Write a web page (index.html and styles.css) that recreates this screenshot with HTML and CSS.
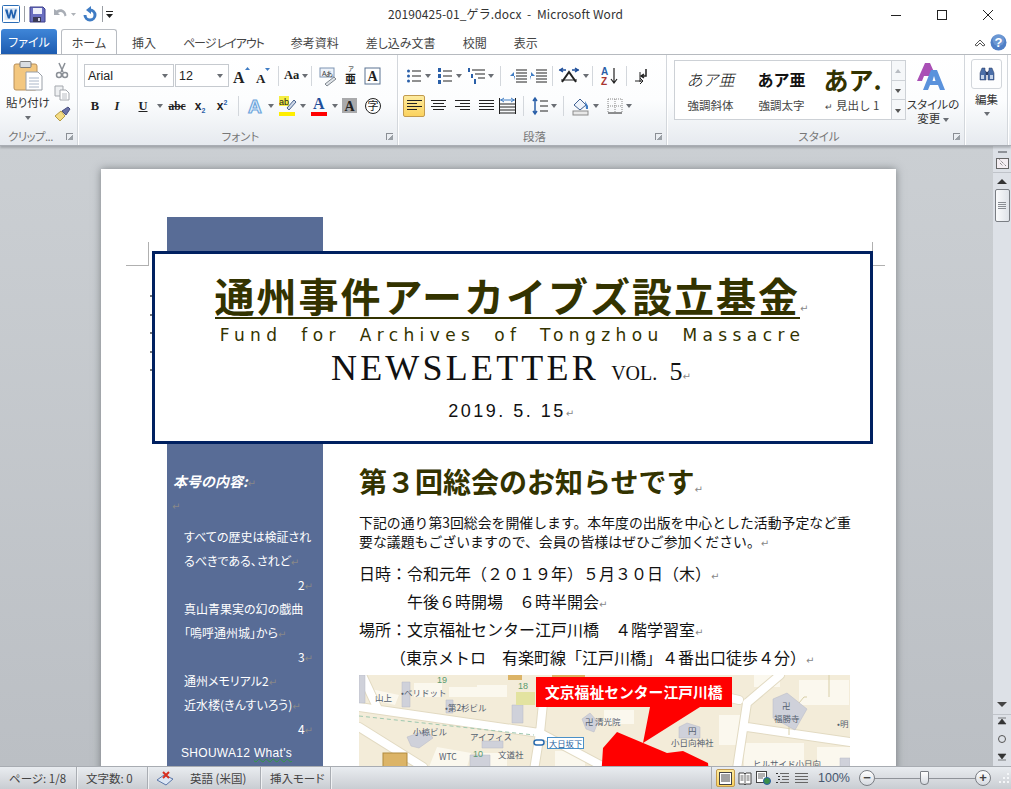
FILE: index.html
```html
<!DOCTYPE html>
<html lang="ja">
<head>
<meta charset="utf-8">
<title>20190425-01_ゲラ.docx - Microsoft Word</title>
<link rel="stylesheet" href="styles.css">
</head>
<body>
<div class="app">

  <header class="titlebar">
    <div class="qat">
      <svg width="18" height="18" viewBox="0 0 18 18"><rect x=".5" y=".5" width="17" height="17" rx="1" fill="#fff" stroke="#2b6cb5"/><rect x="2.5" y="3" width="13" height="12" fill="#dbe8f7"/><path d="M3 4.5h2.6l1.3 6 1.5-6h1.7l1.5 6 1.3-6h2l-2.3 9h-2l-1.3-5.500-1.400 5.500h-2z" fill="#1f5fae"/></svg>
      <i class="qat-sep"></i>
      <svg class="m4" width="17" height="17" viewBox="0 0 17 17"><path d="M1 1h13l2 2v13H1z" fill="#6a6fc0" stroke="#3d3f8a"/><rect x="4" y="2" width="9" height="6" fill="#eef0fa"/><rect x="4" y="11" width="8" height="5" fill="#3a3a56"/><rect x="9" y="12" width="2" height="3" fill="#cfd2e6"/></svg>
      <svg class="m5" width="18" height="16" viewBox="0 0 18 16"><path d="M3 3v6h6L7 7c3-2 6-.5 6.500 3.500l2-1C15 4 10 1.500 5.500 4.500z" fill="#a8adb5"/></svg>
      <svg width="9" height="16" viewBox="0 0 9 16"><path d="M2 7h5L4.500 10z" fill="#aeb2b8"/></svg>
      <svg class="m4" width="16" height="16" viewBox="0 0 16 16"><path d="M8 4a5 5 0 1 1-5 5" fill="none" stroke="#3f7cc4" stroke-width="3"/><path d="M9 0v8L4 4z" fill="#3f7cc4"/></svg>
      <i class="qat-sep m4"></i>
      <svg class="m2" width="10" height="16" viewBox="0 0 10 16"><rect x="1" y="5" width="7" height="1" fill="#222"/><path d="M1 8h7l-3.500 4z" fill="#222"/></svg>
    </div>
    <div class="doc-title">20190425-01_ゲラ.docx  -  Microsoft Word</div>
    <div class="winbtns">
      <svg width="46" height="28" viewBox="0 0 46 28"><rect x="18" y="15" width="10" height="1" fill="#222"/></svg>
      <svg width="46" height="28" viewBox="0 0 46 28"><rect x="18.500" y="10.500" width="9" height="9" fill="none" stroke="#222"/></svg>
      <svg width="46" height="28" viewBox="0 0 46 28"><path d="M18 10l10 10M28 10L18 20" stroke="#222" fill="none"/></svg>
    </div>
  </header>

  <nav class="tabs">
    <a class="tab-file">ファイル</a>
    <a class="tab tab-on">ホーム</a>
    <a class="tab">挿入</a>
    <a class="tab tab-tight">ページ レイアウト</a>
    <a class="tab">参考資料</a>
    <a class="tab">差し込み文書</a>
    <a class="tab">校閲</a>
    <a class="tab">表示</a>
    <div class="tabs-right">
      <svg width="14" height="12" viewBox="0 0 14 12"><path d="M2 8l5-5 5 5-2 1-3-3-3 3z" fill="none" stroke="#555"/></svg>
      <svg width="17" height="17" viewBox="0 0 17 17"><circle cx="8.500" cy="8.500" r="8" fill="#4f7fc6"/><circle cx="8.500" cy="6" r="6" fill="#7ea6dc" opacity=".6"/><text x="8.500" y="13" text-anchor="middle" class="help-q">?</text></svg>
    </div>
  </nav>

  <section class="ribbon">
    <!-- Clipboard -->
    <div class="group g-clip">
      <div class="group-body clip-body">
        <div class="bigbtn paste">
          <svg width="30" height="30" viewBox="0 0 30 30"><rect x="1" y="3" width="23" height="26" rx="2" fill="#f3c77f" stroke="#b9905a"/><rect x="7" y="0.500" width="11" height="6" rx="1" fill="#d9dde2" stroke="#7d7d7d"/><path d="M13 11h12l4 4v14H13z" fill="#fff" stroke="#9aa0a8"/><path d="M16 17h10M16 20h10M16 23h10M16 26h10" stroke="#a9b6c8"/></svg>
          <span class="biglabel">貼り付け</span>
          <span class="drop"></span>
        </div>
        <div class="clip-small">
          <svg width="16" height="18" viewBox="0 0 16 18"><path d="M5 1l4 9M11 1L7 10" stroke="#8a8f96" stroke-width="1.500" fill="none"/><circle cx="5" cy="13" r="2.500" fill="none" stroke="#8a8f96" stroke-width="1.500"/><circle cx="11" cy="13" r="2.500" fill="none" stroke="#8a8f96" stroke-width="1.500"/></svg>
          <svg width="16" height="16" viewBox="0 0 16 16"><path d="M1 1h8v10H1z" fill="#eef0f2" stroke="#a3a7ad"/><path d="M6 5h6l3 3v7H6z" fill="#fff" stroke="#a3a7ad"/><path d="M8 9h5M8 11h5M8 13h5" stroke="#b9bdc3"/></svg>
          <svg width="17" height="16" viewBox="0 0 17 16"><path d="M1 10l6-5 4 5-5 5z" fill="#f4dc84" stroke="#b59b45"/><path d="M8 5l6-4 2 2-4 6z" fill="#6a72a8" stroke="#484f80"/></svg>
        </div>
      </div>
      <div class="group-label label-left"><span>クリップ...</span><i class="launch"></i></div>
    </div>

    <!-- Font -->
    <div class="group g-font">
      <div class="group-body">
        <div class="row">
          <div class="combo combo-name"><span>Arial</span><i class="drop"></i></div>
          <div class="combo combo-size m1"><span>12</span><i class="drop"></i></div>
          <svg class="m3" width="20" height="22" viewBox="0 0 20 22"><text x="1" y="18" class="glyph-a">A</text><path d="M13 5h5l-2.500-3z" fill="#3f7cc4"/></svg>
          <svg class="m1" width="20" height="22" viewBox="0 0 20 22"><text x="3" y="18" class="glyph-a sm">A</text><path d="M12 3h5l-2.500 3z" fill="#3f7cc4"/></svg>
          <i class="sep sep-4"></i>
          <span class="aa">Aa</span><i class="drop drop-in"></i>
          <i class="sep sep-3"></i>
          <svg class="m6" width="20" height="22" viewBox="0 0 20 22"><rect x="2" y="3" width="14" height="9" fill="#eef3fa" stroke="#7d93b2"/><text x="4" y="10.500" class="tiny">Aあ</text><path d="M7 19l9-7 2 2-9 7z" fill="#dfe3e8" stroke="#808890"/></svg>
          <svg class="m4" width="17" height="22" viewBox="0 0 17 22"><text x="6" y="6" class="ruby-t">ア</text><text x="3" y="18" class="ruby-b">亜</text></svg>
          <svg class="m5" width="17" height="22" viewBox="0 0 17 22"><rect x="1" y="3" width="15" height="16" fill="#fff" stroke="#5b7391"/><text x="3.500" y="16" class="glyph-a box">A</text></svg>
        </div>
        <div class="row row2">
          <span class="fmt b">B</span>
          <span class="fmt i">I</span>
          <span class="fmt u m4">U</span><i class="drop drop-in"></i>
          <span class="fmt abc m2">abc</span>
          <span class="fmt sub">x<sub>2</sub></span>
          <span class="fmt sub">x<sup>2</sup></span>
          <i class="sep sep-4"></i>
          <svg class="m8" width="18" height="20" viewBox="0 0 18 20"><text x="1" y="17" class="glow">A</text></svg><i class="drop drop-in"></i>
          <svg class="m5" width="18" height="22" viewBox="0 0 18 22"><rect x="0" y="1" width="10" height="10" fill="#f5ee42"/><text x="0" y="10" class="tiny dark">ab</text><path d="M8 13l7-8 2 2-7 8z" fill="#cdd7e8" stroke="#4b6590"/><rect x="0" y="17" width="16" height="4" fill="#ffee00"/></svg><i class="drop drop-in"></i>
          <svg class="m5" width="18" height="22" viewBox="0 0 18 22"><text x="2" y="14" class="glyph-a blue">A</text><rect x="0" y="17" width="16" height="4" fill="#f00"/></svg><i class="drop drop-in"></i>
          <svg class="m4" width="18" height="18" viewBox="0 0 18 18"><rect width="15" height="15" y="1" fill="#a9aaac"/><text x="2.500" y="14" class="glyph-a box">A</text></svg>
          <svg class="m4" width="18" height="18" viewBox="0 0 18 18"><circle cx="9" cy="9" r="7.500" fill="#fff" stroke="#222"/><text x="3.500" y="13" class="ruby-c">字</text></svg>
        </div>
      </div>
      <div class="group-label"><span>フォント</span><i class="launch"></i></div>
    </div>

    <!-- Paragraph -->
    <div class="group g-para">
      <div class="group-body">
        <div class="row">
          <svg class="m3" width="16" height="18" viewBox="0 0 16 18"><path d="M6 4h9M6 9h9M6 14h9" stroke="#222"/><circle cx="2.500" cy="4" r="1.500" fill="#2a5fa8"/><circle cx="2.500" cy="9" r="1.500" fill="#2a5fa8"/><circle cx="2.500" cy="14" r="1.500" fill="#2a5fa8"/></svg><i class="drop drop-in"></i>
          <svg class="m6" width="16" height="18" viewBox="0 0 16 18"><path d="M6 4h9M6 9h9M6 14h9" stroke="#222"/><path d="M1 1h3v4H1zM1 7h3v4H1zM1 13h3v4H1z" fill="#2a5fa8"/></svg><i class="drop drop-in"></i>
          <svg class="m5" width="18" height="18" viewBox="0 0 18 18"><path d="M5 3h13M8 7h10M11 11h7" stroke="#222"/><path d="M1 1h2v4H1zM4 7h2v4H4zM7 12h2v5H7z" fill="#2a5fa8"/></svg><i class="drop drop-in"></i>
          <i class="sep sep-5"></i>
          <svg class="m8" width="18" height="18" viewBox="0 0 18 18"><path d="M7 3h11M7 6h11M7 9h11M7 12h11M7 15h11" stroke="#222"/><path d="M6 9H1l4-4v8z" fill="#3f7cc4"/></svg>
          <svg class="m2" width="18" height="18" viewBox="0 0 18 18"><path d="M7 3h11M7 6h11M7 9h11M7 12h11M7 15h11" stroke="#222"/><path d="M1 9h5L2 5v8z" fill="#3f7cc4"/></svg>
          <i class="sep sep-4"></i>
          <svg class="m5" width="22" height="18" viewBox="0 0 22 18"><path d="M4 15L11 5l7 10" fill="none" stroke="#222" stroke-width="2"/><path d="M3 13h16" stroke="#222"/><path d="M1 3h7M5 1l-3 2 3 2M14 3h7M17 1l3 2-3 2" stroke="#1f4f9a" fill="none" stroke-width="1.500"/></svg><i class="drop drop-in"></i>
          <i class="sep sep-3"></i>
          <svg class="m7" width="20" height="20" viewBox="0 0 20 20"><text x="1" y="9" class="az blue">A</text><text x="1" y="19" class="az red">Z</text><path d="M14 2v14M11 13l3 4 3-4" fill="none" stroke="#222" stroke-width="1.200"/></svg>
          <i class="sep sep-5"></i>
          <svg class="m6" width="18" height="20" viewBox="0 0 18 20"><path d="M13 3v7H8M11 8L8 10l3 2" fill="none" stroke="#222" stroke-width="1.500"/><path d="M7 6v10" stroke="#222"/><path d="M2 15h8M7 12l3 3-3 3" fill="none" stroke="#222"/></svg>
        </div>
        <div class="row row2">
          <span class="align on"><svg width="15" height="12" viewBox="0 0 15 12"><path d="M0 .5h15M0 3.500h10M0 6.500h15M0 9.500h10" stroke="#222"/></svg></span>
          <span class="align m2"><svg width="15" height="12" viewBox="0 0 15 12"><path d="M0 .5h15M2 3.500h11M0 6.500h15M2 9.500h11" stroke="#222"/></svg></span>
          <span class="align m2"><svg width="15" height="12" viewBox="0 0 15 12"><path d="M0 .5h15M5 3.500h10M0 6.500h15M5 9.500h10" stroke="#222"/></svg></span>
          <span class="align m2"><svg width="15" height="12" viewBox="0 0 15 12"><path d="M0 .5h15M0 3.500h15M0 6.500h15M0 9.500h15" stroke="#222"/></svg></span>
          <svg class="m2" width="18" height="18" viewBox="0 0 18 18"><path d="M1 7h15M1 10h15M1 13h15M1 16h15" stroke="#222"/><path d="M1 3h15M5 1L2 3l3 2M12 1l3 2-3 2" stroke="#3f7cc4" fill="none"/><path d="M.5 1v16M16.500 1v16" stroke="#222"/></svg>
          <i class="sep sep-5"></i>
          <svg class="m8" width="16" height="20" viewBox="0 0 16 20"><path d="M3 2v16M1 5l2-3 2 3M1 15l2 3 2-3" stroke="#2a5fa8" fill="none" stroke-width="1.500"/><path d="M8 5h8M8 10h8M8 15h8" stroke="#222"/></svg><i class="drop drop-in"></i>
          <i class="sep sep-5"></i>
          <svg class="m8" width="18" height="20" viewBox="0 0 18 20"><path d="M2 9l6-6 6 6-6 5z" fill="#eef3fa" stroke="#3f5f90"/><path d="M13 5l3 5v3h-2z" fill="#3f7cc4"/><rect x="1" y="15" width="15" height="4" fill="#e8e8e8" stroke="#8b8b8b"/></svg><i class="drop drop-in"></i>
          <svg class="m8" width="16" height="16" viewBox="0 0 16 16"><path d="M1 1h14M1 8h14M8 1v14M1 1v14M15 1v14" stroke="#888" stroke-dasharray="1 1" fill="none"/><path d="M1 15h14" stroke="#222"/></svg><i class="drop drop-in"></i>
        </div>
      </div>
      <div class="group-label"><span>段落</span><i class="launch"></i></div>
    </div>

    <!-- Styles -->
    <div class="group g-style">
      <div class="group-body style-body">
        <div class="gallery">
          <div class="style-item"><span class="sample s-italic">あア亜</span><span class="style-name">強調斜体</span></div>
          <div class="style-item"><span class="sample s-bold">あア亜</span><span class="style-name">強調太字</span></div>
          <div class="style-item"><span class="sample s-head">あア.</span><span class="style-name"><small>↵</small> 見出し 1</span></div>
          <div class="gallery-scroll">
            <span class="gs gs-up"></span><span class="gs gs-down"></span><span class="gs gs-more"></span>
          </div>
        </div>
        <div class="bigbtn change">
          <svg width="34" height="29" viewBox="0 0 34 29"><path d="M1 19L9 1h5l8 18h-4l-2-5H8l-2 5z" fill="#a94fb5"/><path d="M7 28L15 8h6l8 20h-5l-2-5h-8l-2 5z" fill="#5a92dc"/><path d="M16.500 19h3L18 14z" fill="#fff"/></svg>
          <span class="biglabel">スタイルの</span>
          <span class="biglabel">変更 <i class="drop drop-inline"></i></span>
        </div>
      </div>
      <div class="group-label"><span>スタイル</span><i class="launch"></i></div>
    </div>

    <!-- Editing -->
    <div class="group g-edit">
      <div class="group-body edit-body">
        <div class="edit-btn"><svg width="16" height="14" viewBox="0 0 16 14"><path d="M3 1h3v3h1v9H1V6zM10 1h3l2 5v7H9V4h1z" fill="#4a6ea8" stroke="#2c3e66" stroke-width=".5"/><rect x="7" y="5" width="2" height="3" fill="#2c3e66"/><rect x="2" y="8" width="3" height="4" fill="#c4d3ea"/><rect x="11" y="8" width="3" height="4" fill="#c4d3ea"/></svg></div>
        <span class="biglabel">編集</span>
        <span class="drop"></span>
      </div>
    </div>
  </section>

  <main class="workspace">
    <div class="doc">
      <article class="page">
        <i class="crop crop-l"></i>
        <i class="crop crop-r"></i>
        <div class="anchors"><i></i><i></i><i></i><i></i><i></i></div>

        <aside class="sidebar">
          <p class="side-head">本号の内容:<b class="pm">↵</b></p>
          <p class="side-blank"><b class="pm">↵</b></p>
          <p class="toc toc-first">すべての歴史は検証され</p>
          <p class="toc">るべきである、されど<b class="pm">↵</b></p>
          <p class="toc-no">2<b class="pm">↵</b></p>
          <p class="toc">真山青果実の幻の戯曲</p>
          <p class="toc">「嗚呼通州城」から<b class="pm">↵</b></p>
          <p class="toc-no">3<b class="pm">↵</b></p>
          <p class="toc">通州メモリアル2<b class="pm">↵</b></p>
          <p class="toc">近水楼(きんすいろう)<b class="pm">↵</b></p>
          <p class="toc-no">4<b class="pm">↵</b></p>
          <p class="toc toc-en">SHOUWA12 <span class="squiggle">What's</span></p>
        </aside>

        <div class="body">
          <h2 class="notice">第３回総会のお知らせです<b class="pm">↵</b></h2>
          <p class="lead">下記の通り第3回総会を開催します。本年度の出版を中心とした活動予定など重<br>要な議題もございますので、会員の皆様はぜひご参加ください。<b class="pm">↵</b></p>
          <p class="info">日時：令和元年（２０１９年）５月３０日（木）<b class="pm">↵</b></p>
          <p class="info indent">午後６時開場　６時半開会<b class="pm">↵</b></p>
          <p class="info">場所：文京福祉センター江戸川橋　４階学習室<b class="pm">↵</b></p>
          <p class="info indent2">（東京メトロ　有楽町線「江戸川橋」４番出口徒歩４分）<b class="pm">↵</b></p>
          <svg class="map" width="491" height="120" viewBox="0 0 491 120">
            <rect width="491" height="120" fill="#f3ecd9"/>
            <!-- blocks -->
            <g fill="#fbf8ee">
              <path d="M12 14l28 6-4 10-26-6zM55 8h28v14H55zM90 12h40v10H90zM118 10h30v12h-30zM196 10h30v14h-30zM245 35h30v14h-30zM360 40h24v30h-24zM395 0h26v12h-26zM440 5h50v25h-50zM385 68h60v24h-60zM78 72l34 6-4 14H70zM120 78h28v14h-28zM196 76h30v16h-30zM458 72h33v20h-33zM275 5h40v20h-40z"/>
            </g>
            <!-- roads -->
            <g fill="none" stroke="#e2dac2" stroke-width="10" stroke-linecap="round">
              <path d="M0 32L181 58 260 100M184 28L181 58 171 120M0 52L64 92M3 0L18 32M388 28L374 120M421 0L388 28M388 52L491 67M380 25L350 18"/>
            </g>
            <g fill="none" stroke="#fff" stroke-width="8" stroke-linecap="round">
              <path d="M0 32L181 58 260 100M184 28L181 58 171 120M0 52L64 92M3 0L18 32M388 28L374 120M421 0L388 28M388 52L491 67M380 25L350 18"/>
            </g>
            <path d="M0 41L175 60" stroke="#9fc8b0" stroke-dasharray="4 3" fill="none"/>
            <path d="M430 60V40L445 22h3M470 0V22" stroke="#d8cfa8" fill="none"/>
            <!-- buildings -->
            <g fill="#cfd1da" stroke="#b6b9c6" stroke-width=".5">
              <path d="M43 7h8v25h-8zM87 25h7v13h-7zM153 30h11v18h-11zM223 44l8-6 8 9-4 10-8-3zM48 62l20-7 6 8-14 10-8-2zM123 66h21v7h-21zM111 80h20v12h-20zM320 52l8-4 13 4v11h-21zM414 24l14-6 20 16-12 21-22-12zM0 0h6v28H0zM481 83h10v9h-10z"/>
            </g>
            <rect x="24" y="78" width="24" height="30" fill="#dcb467" stroke="#b08a3f"/>
            <rect x="149" y="-2" width="14" height="7" fill="#dcb467"/>
            <rect x="193" y="-2" width="33" height="4" fill="#dcb467"/>
            <rect x="157" y="17" width="19" height="13" fill="#e3e3a0"/>
            <!-- labels -->
            <g class="map-label">
              <text x="16" y="26">山上</text>
              <text x="42" y="21">•ベリドット</text>
              <text x="86" y="36">•第2杉ビル</text>
              <text x="236" y="50">清光院</text>
              <text x="226" y="50">卍</text>
              <text x="312" y="71">小日向神社</text>
              <text x="329" y="59">円</text>
              <text x="415" y="47">福勝寺</text>
              <text x="423" y="34">卍</text>
              <text x="478" y="52">•明</text>
              <text x="54" y="60">小椋ビル</text>
              <text x="111" y="65">アイフィス</text>
              <text x="139" y="83">文道社</text>
              <text x="80" y="85">WTC</text>
              <text x="394" y="92">ヒルサイド小日向</text>
            </g>
            <g class="map-num">
              <text x="78" y="8">19</text>
              <text x="159" y="14">18</text>
              <text x="114" y="82">10</text>
            </g>
            <rect x="188.500" y="62.500" width="36" height="11" fill="#fff" stroke="#4a90c8"/>
            <rect x="175" y="65" width="10" height="5" rx="2.500" fill="#fff" stroke="#2a6cb0" stroke-width="1.500"/>
            <text x="190" y="71.500" class="map-station">大日坂下</text>
            <!-- venue outline and callout -->
            <path d="M244 73L258 57 308 78 324 76 349 88 352 120H241z" fill="#f00"/>
            <path d="M177 2H373V32H341L284 68 291 32H177z" fill="#f00"/>
            <text x="186" y="23" class="map-callout">文京福祉センター江戸川橋</text>
          </svg>
        </div>

        <section class="banner">
          <h1 class="banner-title"><span>通州事件アーカイブズ設立基金</span><b class="pm">↵</b></h1>
          <p class="banner-en">Fund for Archives of Tongzhou Massacre</p>
          <p class="banner-news">NEWSLETTER <small>VOL.</small> <em>5</em><b class="pm">↵</b></p>
          <p class="banner-date">2019. 5. 15<b class="pm">↵</b></p>
        </section>
      </article>
    </div>

    <div class="vscroll">
      <i class="split"></i>
      <svg class="ruler-toggle" width="13" height="13" viewBox="0 0 13 13"><rect x=".5" y="2.500" width="12" height="10" fill="#f4eef2" stroke="#666"/><path d="M2 2l8 8M4 7l3 3" stroke="#666" stroke-dasharray="1 1"/></svg>
      <i class="sb-line"></i>
      <i class="arrow-up"></i>
      <div class="thumb"><i></i><i></i><i></i><i></i></div>
      <div class="sb-space"></div>
      <i class="arrow-down"></i>
      <i class="sb-line"></i>
      <svg class="browse" width="10" height="10" viewBox="0 0 10 10"><path d="M1 1h8M5 2L1 7h8z" fill="#333" stroke="#333" stroke-width=".6"/></svg>
      <svg class="browse" width="10" height="10" viewBox="0 0 10 10"><circle cx="5" cy="5" r="3.500" fill="none" stroke="#555"/></svg>
      <svg class="browse" width="10" height="10" viewBox="0 0 10 10"><path d="M1 9h8M5 8L1 3h8z" fill="#333" stroke="#333" stroke-width=".6"/></svg>
    </div>
  </main>

  <footer class="status">
    <span class="st st1">ページ: 1/8</span>
    <span class="st st2">文字数: 0</span>
    <span class="st st3"><svg width="18" height="16" viewBox="0 0 18 16"><path d="M1 10l7-5 9 4-7 6z" fill="#dce6f4" stroke="#5a76a8"/><path d="M7 2l6 6M13 2L7 8" stroke="#d83020" stroke-width="2"/></svg></span>
    <span class="st st4">英語 (米国)</span>
    <span class="st st5">挿入モード</span>
    <div class="status-right">
      <i class="st-div"></i>
      <span class="view on"><svg width="13" height="13" viewBox="0 0 13 13"><rect x=".5" y=".5" width="12" height="12" fill="#fff" stroke="#444"/><path d="M2 3h9M2 5h9M2 7h9M2 9h9" stroke="#444"/></svg></span>
      <span class="view"><svg width="14" height="13" viewBox="0 0 14 13"><path d="M1 1h5l1 1 1-1h5v11H8l-1 1-1-1H1z" fill="#fff" stroke="#444"/><path d="M7 2v10M2.500 4h3M2.500 6h3M2.500 8h3M8.500 4h3M8.500 6h3M8.500 8h3" stroke="#666"/></svg></span>
      <span class="view"><svg width="15" height="14" viewBox="0 0 15 14"><rect x=".5" y=".5" width="10" height="11" fill="#fff" stroke="#444"/><path d="M2 3h7M2 5h7M2 7h5" stroke="#666"/><circle cx="11" cy="10" r="3.500" fill="#3a8f4a" stroke="#2a5fa8"/></svg></span>
      <span class="view"><svg width="13" height="13" viewBox="0 0 13 13"><path d="M4 1.500h9M6 4.500h7M6 7.500h7M4 10.500h9" stroke="#666"/><path d="M0 1.500h2M2 4.500h2M2 7.500h2M0 10.500h2" stroke="#333"/></svg></span>
      <span class="view"><svg width="13" height="13" viewBox="0 0 13 13"><path d="M0 1.500h13M0 4.500h13M0 7.500h13M0 10.500h13" stroke="#666"/></svg></span>
      <span class="zoom-pct">100%</span>
      <span class="zoom-btn">−</span>
      <span class="slider"><i></i></span>
      <span class="zoom-btn">+</span>
      <svg class="grip" width="12" height="14" viewBox="0 0 12 14"><path d="M9 2h2v2H9zM5 6h2v2H5zM9 6h2v2H9zM1 10h2v2H1zM5 10h2v2H5zM9 10h2v2H9z" fill="#f4f6f8"/></svg>
    </div>
  </footer>
</div>
</body>
</html>
```
FILE: styles.css
```css
* { box-sizing: border-box; }
html, body { margin: 0; padding: 0; }
body {
  font-family: "Noto Sans CJK JP", "Noto Sans", sans-serif;
  background: #fff;
  color: #222;
}
p, h1, h2 { margin: 0; font-weight: normal; }
i { font-style: normal; display: block; }
svg { display: block; flex: none; }

.app { width: 1011px; height: 789px; display: flex; flex-direction: column; overflow: hidden; }

.m1 { margin-left: 1px; } .m2 { margin-left: 2px; } .m3 { margin-left: 3px; }
.m4 { margin-left: 4px; } .m5 { margin-left: 5px; } .m6 { margin-left: 6px; }
.m7 { margin-left: 7px; } .m8 { margin-left: 8px; }

/* Title bar */
.titlebar { height: 28px; flex: none; display: grid; grid-template-columns: 1fr auto 1fr; align-items: center; background: #fff; }
.qat { display: flex; align-items: center; padding-left: 2px; }
.qat-sep { width: 1px; height: 16px; background: #9a9ea4; margin-left: 4px; }
.doc-title { font-size: 12px; color: #333; line-height: 28px; white-space: pre; letter-spacing: .1px; }
.winbtns { display: flex; justify-content: flex-end; }

/* Tabs */
.tabs { height: 26px; flex: none; display: flex; align-items: flex-end; padding-left: 1px; position: relative; background: #fff; font-feature-settings: "palt"; }
.tab-file { width: 56px; height: 25px; background: linear-gradient(#3f86d8, #1d5bb0); color: #fff; font-size: 12px; line-height: 25px; text-align: center; border-radius: 3px 3px 0 0; margin-right: 4px; }
.tab { height: 25px; padding: 0 12.500px; font-size: 12px; line-height: 25px; color: #444; border: 1px solid transparent; border-bottom: 0; white-space: nowrap; }
.tab-tight { letter-spacing: -1.100px; }
.tab-on { width: 56px; height: 26px; padding: 0; text-align: center; margin-bottom: -1px; margin-right: 1.500px; border-color: #b8bcc2; border-radius: 3px 3px 0 0; background: #fff; position: relative; z-index: 1; }
.tabs-right { margin-left: auto; display: flex; align-items: center; gap: 3px; padding: 0 4px 3px 0; }
.help-q { font: bold 13px "Liberation Sans", sans-serif; fill: #fff; }

/* Ribbon */
.ribbon { height: 92px; flex: none; display: flex; border-top: 1px solid #b6babf; border-bottom: 1px solid #a9adb3; box-shadow: 0 2px 2px rgba(90,95,100,.35); background: linear-gradient(#fff 0, #fcfdfe 50%, #e6eaef 100%); position: relative; z-index: 2; }
.group { display: flex; flex-direction: column; flex: none; border-right: 1px solid #d3d7dc; box-shadow: 1px 0 0 #fff; }
.g-clip { width: 78px; }
.g-font { width: 319px; padding-left: 5px; margin-left: 1px; }
.g-para { width: 268px; padding-left: 4px; margin-left: 1px; }
.g-style { width: 297px; padding-left: 6px; margin-left: 1px; }
.g-edit { width: 42px; margin-left: 1px; }
.group-body { flex: 1; padding-top: 9px; }
.group-label { height: 16px; flex: none; display: flex; justify-content: center; align-items: center; font-size: 11.500px; color: #777; position: relative; line-height: 16px; margin-bottom: 1px; font-feature-settings: "palt"; }
.label-left { justify-content: flex-start; padding-left: 8px; letter-spacing: -.6px; }
.launch { position: absolute; right: 4px; top: 5px; width: 7px; height: 7px; border-top: 1px solid #8a8e94; border-left: 1px solid #8a8e94; background: linear-gradient(135deg, transparent 55%, #9aa0a6 55%); }

.clip-body { display: flex; padding-top: 0; }
.bigbtn { display: flex; flex-direction: column; align-items: center; }
.paste { width: 46px; margin-left: 5px; padding-top: 6px; }
.paste svg { margin-bottom: 4px; }
.biglabel { font-size: 11.500px; line-height: 14px; color: #333; white-space: nowrap; font-feature-settings: "palt"; }
.clip-small { margin-left: 3px; padding-top: 7px; display: flex; flex-direction: column; gap: 5px; }
.drop { width: 0; height: 0; border: 3.500px solid transparent; border-top: 4px solid #6a6e74; border-bottom: 0; display: block; }
span.drop { margin-top: 7px; }
.drop-in { margin-left: 3px; flex: none; }
.drop-inline { display: inline-block; vertical-align: middle; }

.row { display: flex; align-items: center; height: 23px; }
.row2 { margin-top: 7px; }
.combo { height: 23px; background: #fff; border: 1px solid #c6cacf; display: flex; align-items: center; justify-content: space-between; padding: 0 5px 0 3px; font: 12.500px "Liberation Sans", sans-serif; color: #222; }
.combo-name { width: 90px; }
.combo-size { width: 54px; }
.sep { width: 1px; height: 20px; background: #d3d7dc; flex: none; }
.sep-3 { margin-left: 3px; } .sep-4 { margin-left: 5px; } .sep-5 { margin-left: 6px; }
.glyph-a { font: bold 16px "Liberation Serif", serif; fill: #222; }
.glyph-a.sm { font-size: 13px; }
.glyph-a.box { font-size: 14px; }
.glyph-a.blue { fill: #1f4f9a; }
.aa { font: bold 12.500px "Liberation Serif", serif; margin-left: 5px; color: #222; }
.tiny { font: 6.500px "Liberation Sans", sans-serif; fill: #333; }
.tiny.dark { font-size: 9px; fill: #222; }
.ruby-t { font-size: 6px; fill: #222; }
.ruby-b { font-size: 11px; font-weight: bold; fill: #222; }
.ruby-c { font-size: 11px; fill: #222; }
.fmt { width: 22px; height: 22px; text-align: center; font: 12.500px/22px "Liberation Serif", serif; color: #222; flex: none; }
.b { font-weight: bold; }
.i { font-style: italic; font-weight: bold; }
.u { text-decoration: underline; font-weight: bold; }
.abc { width: 24px; text-decoration: line-through; font-weight: bold; font-size: 11.500px; }
.sub { font: bold 12px/22px "Liberation Sans", sans-serif; }
.sub sub, .sub sup { font-size: 7px; color: #2a5fa8; line-height: 0; }
.glow { font: bold 19px "Liberation Sans", sans-serif; fill: #e9f3fd; stroke: #6fa6dc; stroke-width: 1.200px; }
.az { font: bold 10px "Liberation Sans", sans-serif; }
.az.blue { fill: #2a5fa8; }
.az.red { fill: #a8352f; }
.align { width: 22px; height: 22px; display: flex; align-items: center; justify-content: center; flex: none; }
.align.on { background: linear-gradient(#fdeb9f, #fbd25e); border: 1px solid #c29b4f; border-radius: 2px; }

/* Styles gallery */
.style-body { display: flex; padding-top: 5px; }
.gallery { width: 232px; height: 60px; background: #fff; border: 1px solid #cdd1d6; display: flex; flex: none; }
.style-item { width: 71px; display: flex; flex-direction: column; align-items: center; flex: none; }
.sample { height: 36px; display: flex; align-items: center; white-space: nowrap; color: #111; }
.s-italic { font: italic 300 16px "Noto Sans CJK JP", sans-serif; }
.s-bold { font: 700 16px "Noto Sans CJK JP", sans-serif; }
.s-head { font-size: 25px; font-weight: 700; color: #333300; }
.style-name { font-size: 11.500px; line-height: 16px; color: #444; white-space: nowrap; }
.style-name small { font-size: 9px; }
.gallery-scroll { width: 14px; margin-left: auto; display: flex; flex-direction: column; border-left: 1px solid #cdd1d6; background: #f5f7f9; flex: none; }
.gs { flex: 1; border-bottom: 1px solid #cdd1d6; position: relative; }
.gs:last-child { border-bottom: 0; }
.gs::after { content: ""; position: absolute; left: 3px; top: 8px; border: 3.500px solid transparent; }
.gs-up::after { border-bottom: 4px solid #b8bcc2; border-top: 0; }
.gs-down::after { border-top: 4px solid #555; border-bottom: 0; }
.gs-more::after { border-top: 4px solid #555; border-bottom: 0; top: 9px; }
.change { width: 56px; padding-top: 2px; margin-left: -1px; }
.change svg { margin-bottom: 6px; }
.edit-body { display: flex; flex-direction: column; align-items: center; padding-top: 4px; }
.edit-btn { width: 31px; height: 30px; border: 1px solid #d2d6db; border-radius: 3px; display: flex; align-items: center; justify-content: center; margin-bottom: 3px; }
.edit-body .drop { margin-top: 6px; }

/* Document area */
.workspace { flex: 1; min-height: 0; display: flex; }
.doc { flex: 1; min-width: 0; overflow: hidden; background: linear-gradient(#cbcfd3, #bbbfc4); padding: 23px 0 0 101px; }
.page { width: 795px; height: 1100px; background: #fff; box-shadow: 0 0 8px rgba(60,65,70,.55); padding: 48px 0 0 66px; display: flex; position: relative; }

.crop { position: absolute; }
.crop-l { left: 25px; top: 73px; width: 23px; height: 24px; border-right: 1px solid #b0b0b0; border-bottom: 1px solid #b0b0b0; }
.crop-r { left: 771px; top: 73px; width: 13px; height: 24px; border-left: 1px solid #b0b0b0; border-bottom: 1px solid #b0b0b0; }
.anchors { position: absolute; left: 49px; top: 126px; display: flex; flex-direction: column; gap: 16.500px; }
.anchors i { width: 3px; height: 2px; background: #777; }

.sidebar { width: 156px; height: 1000px; background: #586c96; color: #fff; flex: none; padding-top: 255px; font-size: 12px; }
.pm { font: normal 10px "DejaVu Sans", sans-serif; color: #888; }
.side-head { font-size: 14px; font-weight: 700; font-style: italic; line-height: 18px; padding-left: 6px; }
.side-blank { line-height: 20px; padding-left: 5px; margin-top: 5px; }
.toc { line-height: 24px; padding-left: 17px; white-space: nowrap; font-feature-settings: "palt"; }
.toc-first { margin-top: 10px; }
.toc-no { line-height: 24px; text-align: right; padding-right: 10px; }
.toc-en { padding-left: 14px; font-family: "Liberation Sans", sans-serif; letter-spacing: .3px; }
.squiggle { text-decoration: underline wavy #2f9a3c 1px; }

.body { margin-left: 36px; width: 491px; flex: none; padding-top: 244px; }
.notice { font-size: 28px; font-weight: 700; color: #333300; line-height: 40px; white-space: nowrap; }
.lead { font-size: 13.880px; line-height: 19px; margin-top: 12px; white-space: nowrap; color: #111; }
.info { font-size: 16px; line-height: 28px; white-space: nowrap; color: #111; }
.lead + .info { margin-top: 8px; }
.indent { padding-left: 48px; }
.indent2 { padding-left: 31px; }
.map { margin-top: 4px; }
.map-label text { font-size: 8.500px; fill: #55606e; }
.map-num text { font: 9px "Liberation Sans", sans-serif; fill: #5a9a70; }
.map-station { font-size: 8.300px; fill: #1f5f9e; }
.map-callout { font-size: 14.800px; font-weight: 700; fill: #fff; }

/* Headline box lying over the page */
.banner { position: absolute; left: 51px; top: 82px; width: 721px; height: 193px; background: #fff; border: 3px solid #002060; display: flex; flex-direction: column; align-items: center; padding-top: 20px; }
.banner-title { font-size: 40px; font-weight: 700; color: #333300; line-height: 43px; white-space: nowrap; letter-spacing: 2px; }
.banner-title span { border-bottom: 2px solid #333300; display: inline-block; }
.banner-en { font: 17px/20px "DejaVu Sans", sans-serif; color: #333300; letter-spacing: 5.400px; word-spacing: 8px; white-space: nowrap; margin-top: 6px; }
.banner-news { font: 36px/44px "Liberation Serif", serif; letter-spacing: 3.200px; color: #111; white-space: nowrap; margin-top: 1px; }
.banner-news small { font-size: 20px; letter-spacing: 0; color: #111; }
.banner-news em { font-style: normal; font-size: 26px; letter-spacing: 0; }
.banner-date { font: 18px/24px "Liberation Sans", sans-serif; letter-spacing: 2.500px; color: #111; margin-top: 4px; }

/* Vertical scrollbar */
.vscroll { width: 18px; flex: none; background: #dde1e7; display: flex; flex-direction: column; align-items: center; }
.split { width: 9px; height: 2px; background: #8f9399; margin-top: 5px; }
.ruler-toggle { margin-top: 3px; }
.sb-line { width: 100%; height: 1px; background: #bfc3c9; margin-top: 3px; flex: none; }
.arrow-up { width: 0; height: 0; border: 5px solid transparent; border-bottom: 5px solid #333; border-top: 0; margin-top: 6px; }
.thumb { width: 15px; height: 33px; border: 1px solid #7a7e84; border-radius: 2px; background: linear-gradient(90deg, #fafbfc, #dfe3e9); margin-top: 5px; display: flex; flex-direction: column; align-items: center; justify-content: center; gap: 1px; }
.thumb i { width: 8px; height: 1px; background: #8a8e94; }
.sb-space { flex: 1; }
.arrow-down { width: 0; height: 0; border: 5px solid transparent; border-top: 5px solid #444; border-bottom: 0; margin-bottom: 2px; }
.arrow-down + .sb-line { margin-top: 5px; }
.browse { margin-top: 7px; }
.sb-line + .browse { margin-top: 2px; }
.browse:last-child { margin-bottom: 5px; }

/* Status bar */
.status { height: 23px; flex: none; display: flex; align-items: center; background: linear-gradient(#e9ecf0, #c9cdd2); border-top: 1px solid #a8acb2; font-size: 11.500px; color: #444; position: relative; font-feature-settings: "palt"; }
.st { height: 22px; line-height: 22px; border-right: 1px solid #a9adb3; box-shadow: 1px 0 0 #f0f2f4; display: flex; align-items: center; white-space: nowrap; }
.st1 { width: 77px; padding-left: 9px; }
.st2 { width: 71px; padding-left: 9px; }
.st3 { width: 33px; padding-left: 8px; border-right: 0; box-shadow: none; }
.st4 { width: 80px; padding-left: 9px; }
.st5 { width: 70px; padding-left: 9px; }
.status-right { margin-left: auto; display: flex; align-items: center; height: 22px; }
.st-div { width: 1px; height: 22px; background: #a9adb3; margin-right: 4px; }
.view { width: 19px; height: 18px; display: flex; align-items: center; justify-content: center; }
.view.on { background: linear-gradient(#fdeb9f, #fbd25e); border: 1px solid #c29b4f; border-radius: 2px; }
.zoom-pct { font-size: 12.500px; color: #46566e; font-family: "Liberation Sans", sans-serif; margin-left: 7px; width: 41px; }
.zoom-btn { width: 16px; height: 16px; border: 1px solid #7a7e84; border-radius: 50%; background: linear-gradient(#fff, #d6dae0); text-align: center; font: bold 13px/13px "Liberation Sans", sans-serif; color: #444; flex: none; }
.slider { width: 100px; height: 1px; background: #8f9399; position: relative; }
.slider i { position: absolute; left: 45px; top: -7px; width: 9px; height: 14px; background: linear-gradient(#fff, #d6dae0); border: 1px solid #7a7e84; border-radius: 1px 1px 4px 4px; }
.grip { margin-left: 7px; margin-right: 1px; }
```
